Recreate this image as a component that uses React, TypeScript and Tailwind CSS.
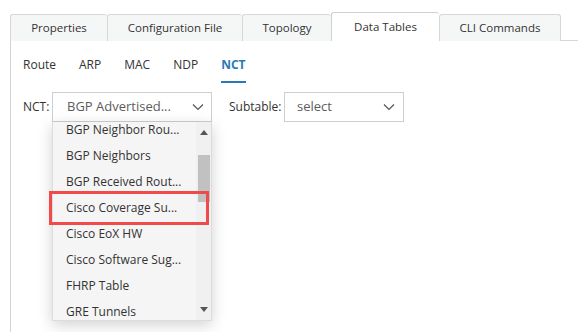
import React from "react";

const Chevron = () => (
  <svg width="12" height="8" viewBox="0 0 12 8" className="shrink-0">
    <path d="M1 1.5 L6 6.5 L11 1.5" fill="none" stroke="#555" strokeWidth="1.2" />
  </svg>
);

const tabs = [
  { label: "Properties", w: "w-[97px]" },
  { label: "Configuration File", w: "w-[135px]" },
  { label: "Topology", w: "w-[89px]" },
  { label: "Data Tables", w: "w-[108px]", active: true },
  { label: "CLI Commands", w: "w-[122px]", last: true },
];

const items = [
  "BGP Neighbor Rou...",
  "BGP Neighbors",
  "BGP Received Rout...",
  "Cisco Coverage Su...",
  "Cisco EoX HW",
  "Cisco Software Sug...",
  "FHRP Table",
  "GRE Tunnels",
];

export default function App() {
  return (
    <div
      className="relative w-[578px] h-[332px] bg-white overflow-hidden text-[12px] text-[#333]"
      style={{ fontFamily: '"Open Sans", "Noto Sans", sans-serif' }}
    >
      {/* Tab bar */}
      <div className="flex items-end pl-[10px] pt-[12px] h-[41px] text-[11.5px]">
        {tabs.map((t) =>
          t.active ? (
            <div
              key={t.label}
              className={`${t.w} h-[29px] bg-white border-l border-t border-[#cdd1d2] rounded-t-[3px] flex items-center justify-center pb-[1px] relative z-10`}
            >
              {t.label}
            </div>
          ) : (
            <div
              key={t.label}
              className={`${t.w} h-[27px] bg-[#f5f7f7] border-l border-t ${t.last ? "border-r" : ""} border-[#d4d8d9] rounded-t-[3px] flex items-center justify-center`}
            >
              {t.label}
            </div>
          )
        )}
        <div className="flex-1 h-[1px] bg-[#d4d8d9]" />
      </div>

      {/* Content panel */}
      <div className="ml-[10px] border-l border-[#cfd3d4] h-[291px] pl-[12px]">
        {/* Sub nav */}
        <div className="flex items-start gap-[23px] pt-[15px] h-[51px]">
          {["Route", "ARP", "MAC", "NDP"].map((s) => (
            <div key={s} className="leading-[17px]">
              {s}
            </div>
          ))}
          <div className="flex flex-col items-stretch">
            <div className="leading-[17px] font-bold text-[#2a7ab8]">NCT</div>
            <div className="h-[2px] bg-[#2a7ab8] mt-[8px]" />
          </div>
        </div>

        {/* Form row */}
        <div className="flex items-center">
          <div className="w-[29px]">NCT:</div>
          <div className="relative">
            <div className="w-[160px] h-[30px] border border-[#cfcfcf] flex items-center justify-between pl-[14px] pr-[7px] text-[13px] text-[#5c5c5c]">
              <span>BGP Advertised...</span>
              <Chevron />
            </div>
            {/* Dropdown */}
            <div className="absolute left-0 top-[30px] w-[160px] h-[199px] bg-[#f5f5f5] border border-[#dcdcdc] border-t-0 shadow-[0_4px_14px_rgba(0,0,0,0.18)] overflow-hidden flex z-20">
              <div className="flex-1 overflow-hidden">
                <div className="-mt-[5px]">
                  {items.map((it) => (
                    <div key={it} className="h-[26px] flex items-center pl-[13px] whitespace-nowrap">
                      {it}
                    </div>
                  ))}
                </div>
              </div>
              <div className="w-[15px] bg-[#f0f0f0] flex flex-col items-center">
                <div className="h-[20px] flex items-center justify-center pt-[1px]">
                  <svg width="8" height="5" viewBox="0 0 8 5">
                    <path d="M0 5 L4 0 L8 5 Z" fill="#555" />
                  </svg>
                </div>
                <div className="mt-[13px] w-[12px] h-[47px] bg-[#c1c1c1]" />
                <div className="flex-1" />
                <div className="h-[16px] flex items-start justify-center pt-[3px]">
                  <svg width="8" height="5" viewBox="0 0 8 5">
                    <path d="M0 0 L8 0 L4 5 Z" fill="#555" />
                  </svg>
                </div>
              </div>
            </div>
          </div>
          <div className="ml-[17px] w-[55px]">Subtable:</div>
          <div className="w-[120px] h-[30px] border border-[#cfcfcf] flex items-center justify-between pl-[12px] pr-[8px] text-[13px] text-[#5c5c5c]">
            <span>select</span>
            <Chevron />
          </div>
        </div>
      </div>

      {/* Highlight annotation */}
      <div className="absolute left-[49px] top-[191px] w-[160px] h-[34px] border-[3px] border-[#f04a4c] z-30" />
    </div>
  );
}
